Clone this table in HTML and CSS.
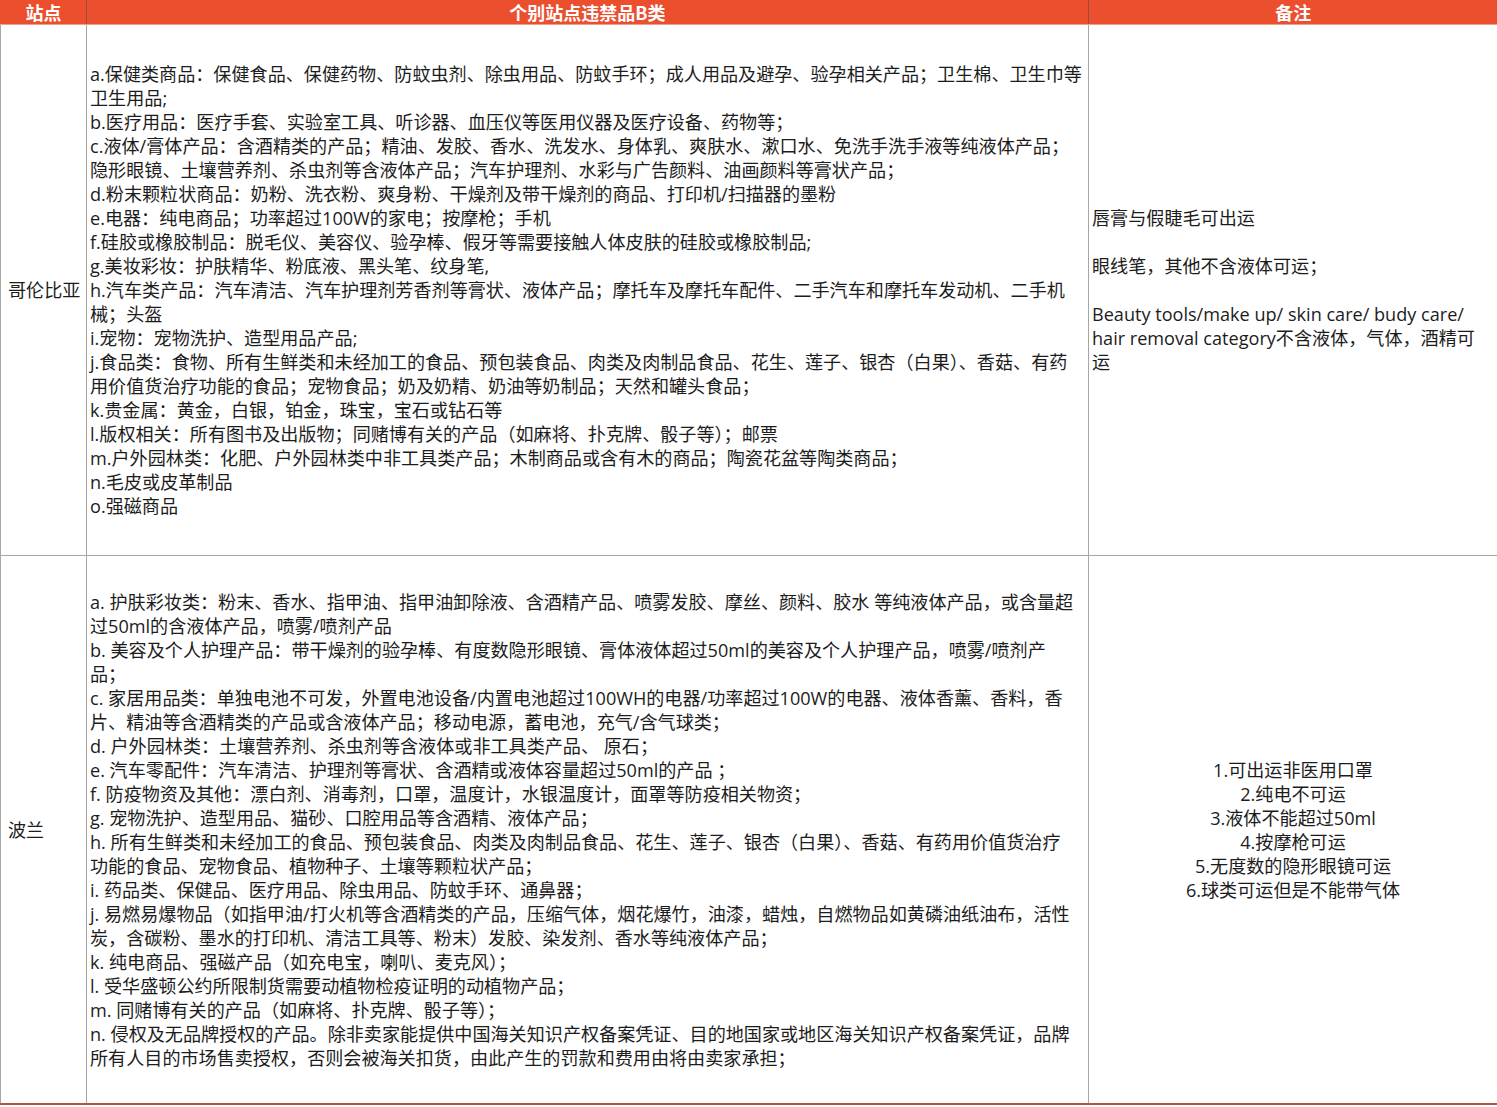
FILE: index.html
```
<!DOCTYPE html>
<html lang="zh-CN">
<head>
<meta charset="utf-8">
<title>个别站点违禁品B类</title>
<link rel="stylesheet" href="styles.css">
</head>
<body>
<table class="sheet">
  <colgroup>
    <col class="c-site">
    <col class="c-items">
    <col class="c-note">
  </colgroup>
  <thead>
    <tr class="head">
      <th>站点</th>
      <th>个别站点违禁品B类</th>
      <th>备注</th>
    </tr>
  </thead>
  <tbody>
    <tr class="row-co">
      <td class="site">哥伦比亚</td>
      <td class="items">
        <div>a.保健类商品：保健食品、保健药物、防蚊虫剂、除虫用品、防蚊手环；成人用品及避孕、验孕相关产品；卫生棉、卫生巾等</div>
        <div>卫生用品;</div>
        <div>b.医疗用品：医疗手套、实验室工具、听诊器、血压仪等医用仪器及医疗设备、药物等；</div>
        <div>c.液体/膏体产品：含酒精类的产品；精油、发胶、香水、洗发水、身体乳、爽肤水、漱口水、免洗手洗手液等纯液体产品；</div>
        <div>隐形眼镜、土壤营养剂、杀虫剂等含液体产品；汽车护理剂、水彩与广告颜料、油画颜料等膏状产品；</div>
        <div>d.粉末颗粒状商品：奶粉、洗衣粉、爽身粉、干燥剂及带干燥剂的商品、打印机/扫描器的墨粉</div>
        <div>e.电器：纯电商品；功率超过100W的家电；按摩枪；手机</div>
        <div>f.硅胶或橡胶制品：脱毛仪、美容仪、验孕棒、假牙等需要接触人体皮肤的硅胶或橡胶制品;</div>
        <div>g.美妆彩妆：护肤精华、粉底液、黑头笔、纹身笔,</div>
        <div>h.汽车类产品：汽车清洁、汽车护理剂芳香剂等膏状、液体产品；摩托车及摩托车配件、二手汽车和摩托车发动机、二手机</div>
        <div>械；头盔</div>
        <div>i.宠物：宠物洗护、造型用品产品;</div>
        <div>j.食品类：食物、所有生鲜类和未经加工的食品、预包装食品、肉类及肉制品食品、花生、莲子、银杏（白果）、香菇、有药</div>
        <div>用价值货治疗功能的食品；宠物食品；奶及奶精、奶油等奶制品；天然和罐头食品；</div>
        <div>k.贵金属：黄金，白银，铂金，珠宝，宝石或钻石等</div>
        <div>l.版权相关：所有图书及出版物；同赌博有关的产品（如麻将、扑克牌、骰子等）；邮票</div>
        <div>m.户外园林类：化肥、户外园林类中非工具类产品；木制商品或含有木的商品；陶瓷花盆等陶类商品；</div>
        <div>n.毛皮或皮革制品</div>
        <div>o.强磁商品</div>
      </td>
      <td class="note">
        <div>唇膏与假睫毛可出运</div>
        <div class="blank">&nbsp;</div>
        <div>眼线笔，其他不含液体可运；</div>
        <div class="blank">&nbsp;</div>
        <div>Beauty tools/make up/ skin care/ budy care/</div>
        <div>hair removal category不含液体，气体，酒精可</div>
        <div>运</div>
      </td>
    </tr>
    <tr class="row-pl">
      <td class="site">波兰</td>
      <td class="items">
        <div>a. 护肤彩妆类：粉末、香水、指甲油、指甲油卸除液、含酒精产品、喷雾发胶、摩丝、颜料、胶水 等纯液体产品，或含量超</div>
        <div>过50ml的含液体产品，喷雾/喷剂产品</div>
        <div>b. 美容及个人护理产品：带干燥剂的验孕棒、有度数隐形眼镜、膏体液体超过50ml的美容及个人护理产品，喷雾/喷剂产</div>
        <div>品；</div>
        <div>c. 家居用品类：单独电池不可发，外置电池设备/内置电池超过100WH的电器/功率超过100W的电器、液体香薰、香料，香</div>
        <div>片、精油等含酒精类的产品或含液体产品；移动电源，蓄电池，充气/含气球类；</div>
        <div>d. 户外园林类：土壤营养剂、杀虫剂等含液体或非工具类产品、 原石；</div>
        <div>e. 汽车零配件：汽车清洁、护理剂等膏状、含酒精或液体容量超过50ml的产品 ；</div>
        <div>f. 防疫物资及其他：漂白剂、消毒剂，口罩，温度计，水银温度计，面罩等防疫相关物资；</div>
        <div>g. 宠物洗护、造型用品、猫砂、口腔用品等含酒精、液体产品；</div>
        <div>h. 所有生鲜类和未经加工的食品、预包装食品、肉类及肉制品食品、花生、莲子、银杏（白果）、香菇、有药用价值货治疗</div>
        <div>功能的食品、宠物食品、植物种子、土壤等颗粒状产品；</div>
        <div>i. 药品类、保健品、医疗用品、除虫用品、防蚊手环、通鼻器；</div>
        <div>j. 易燃易爆物品（如指甲油/打火机等含酒精类的产品，压缩气体，烟花爆竹，油漆，蜡烛，自燃物品如黄磷油纸油布，活性</div>
        <div>炭，含碳粉、墨水的打印机、清洁工具等、粉末）发胶、染发剂、香水等纯液体产品；</div>
        <div>k. 纯电商品、强磁产品（如充电宝，喇叭、麦克风）；</div>
        <div>l. 受华盛顿公约所限制货需要动植物检疫证明的动植物产品；</div>
        <div>m. 同赌博有关的产品（如麻将、扑克牌、骰子等）；</div>
        <div>n. 侵权及无品牌授权的产品。除非卖家能提供中国海关知识产权备案凭证、目的地国家或地区海关知识产权备案凭证，品牌</div>
        <div>所有人目的市场售卖授权，否则会被海关扣货，由此产生的罚款和费用由将由卖家承担；</div>
      </td>
      <td class="note centered">
        <div>1.可出运非医用口罩</div>
        <div>2.纯电不可运</div>
        <div>3.液体不能超过50ml</div>
        <div>4.按摩枪可运</div>
        <div>5.无度数的隐形眼镜可运</div>
        <div>6.球类可运但是不能带气体</div>
      </td>
    </tr>
  </tbody>
</table>
</body>
</html>
```
FILE: styles.css
```
html, body {
  margin: 0;
  padding: 0;
  background: #ffffff;
}

body {
  font-family: "Open Sans", "Noto Sans CJK SC", sans-serif;
  color: #1c1c1c;
}

.sheet {
  width: 1497px;
  border-collapse: collapse;
  table-layout: fixed;
}

.c-site { width: 86px; }
.c-items { width: 1002px; }
.c-note { width: 409px; }

.head th {
  height: 24px;
  padding: 0;
  background: #ec4f2e;
  color: #ffffff;
  font-family: "Noto Sans CJK SC", sans-serif;
  font-weight: 700;
  font-size: 18px;
  line-height: 24px;
  text-align: center;
  border-left: 1px solid #9a4a3a;
  border-bottom: 1px solid #e9a08f;
}

.head th:first-child {
  border-left: 1px solid #ec4f2e;
}

.sheet td {
  padding: 0;
  border: 1px solid #a6a6a6;
  vertical-align: middle;
  font-size: 18.1px;
  line-height: 24px;
}

.row-co td { height: 530px; }
.row-pl td { height: 547px; }

.row-pl td {
  border-bottom: 2px solid #b0553f;
}

.site {
  padding-left: 7px !important;
  text-align: left;
  white-space: nowrap;
}

.items {
  padding-left: 3px !important;
  white-space: nowrap;
  overflow: hidden;
}

.note {
  padding-left: 3px !important;
  white-space: nowrap;
}

.note.centered {
  text-align: center;
  padding-left: 0 !important;
}

.blank {
  height: 24px;
}
```
